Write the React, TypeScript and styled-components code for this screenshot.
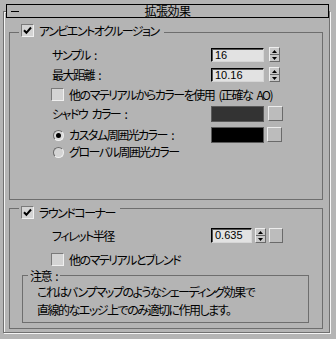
import React from "react";
import styled, { createGlobalStyle } from "styled-components";

const bg = "#b4b4b4";

const GlobalStyle = createGlobalStyle`
  body {
    margin: 0;
    background: ${bg};
  }
`;

const Page = styled.div`
  width: 336px;
  height: 339px;
  overflow: hidden;
  background: ${bg};
  padding-top: 11px;
  box-sizing: border-box;
  font-family: "Noto Sans CJK JP", sans-serif;
  font-size: 12px;
  font-feature-settings: "palt";
  letter-spacing: -1.5px;
  word-spacing: 3px;
  color: #000;
`;

const Rollout = styled.div`
  margin-left: 3px;
  width: 327px;
  height: 322px;
  box-sizing: border-box;
  border: 1px solid #707070;
  box-shadow: 1px 1px 0 #f4f4f4, inset 1px 1px 0 #f4f4f4;
`;

const TitleBar = styled.div`
  display: grid;
  grid-template-columns: 1fr auto 1fr;
  align-items: center;
  margin: -8px 0 0 2px;
  height: 14px;
  box-sizing: border-box;
  border: 1px solid #000;
  background: ${bg};
  line-height: 12px;
  letter-spacing: -0.5px;
`;

const Minus = styled.span`
  display: block;
  width: 8px;
  height: 1px;
  margin-left: 4px;
  background: #000;
`;

const Group = styled.div<{ $mt: number; $h: number }>`
  margin: ${(p) => p.$mt}px 0 0 5px;
  width: 314px;
  height: ${(p) => p.$h}px;
  box-sizing: border-box;
  border: 1px solid #6e6e6e;
`;

const Legend = styled.div<{ $mt: number }>`
  display: flex;
  align-items: center;
  gap: 5px;
  width: fit-content;
  height: 13px;
  margin: ${(p) => p.$mt}px 0 0 9px;
  padding: 0 5px 0 2px;
  background: ${bg};
  white-space: nowrap;
  line-height: 13px;
`;

const Row = styled.div<{ $mt: number; $h: number }>`
  display: grid;
  grid-template-columns: 201px auto;
  align-items: center;
  margin-top: ${(p) => p.$mt}px;
  height: ${(p) => p.$h}px;
`;

const Label = styled.span<{ $indent?: number }>`
  display: flex;
  align-items: center;
  gap: 5px;
  padding-left: ${(p) => p.$indent ?? 42}px;
  white-space: nowrap;
  line-height: 14px;
`;

const CheckRow = styled.div<{ $mt: number }>`
  display: flex;
  align-items: center;
  gap: 5px;
  height: 13px;
  margin-top: ${(p) => p.$mt}px;
  padding-left: 41px;
  white-space: nowrap;
  line-height: 13px;
`;

const Controls = styled.div<{ $gap: number }>`
  display: flex;
  align-items: center;
  gap: ${(p) => p.$gap}px;
`;

const NumField = styled.div<{ $w: number; $h: number }>`
  width: ${(p) => p.$w}px;
  height: ${(p) => p.$h}px;
  box-sizing: border-box;
  padding-left: 3px;
  border-style: solid;
  border-width: 1px;
  border-color: #000 #d6d6d6 #d6d6d6 #000;
  box-shadow: inset 1px 1px 0 #555;
  background: #e2e2e2;
  font-family: "Liberation Sans", Arial, sans-serif;
  font-size: 11px;
  letter-spacing: 0;
  line-height: ${(p) => p.$h - 2}px;
`;

const SpinBox = styled.div<{ $h: number }>`
  display: flex;
  flex-direction: column;
  width: 11px;
  height: ${(p) => p.$h}px;
  box-sizing: border-box;
  border-style: solid;
  border-width: 1px;
  border-color: #eeeeee #6a6a6a #6a6a6a #eeeeee;
  background: #c8c8c8;
`;

const SpinHalf = styled.div<{ $down?: boolean }>`
  flex: 1;
  display: flex;
  align-items: center;
  justify-content: center;
  border-top: ${(p) => (p.$down ? "1px solid #6a6a6a" : "none")};
`;

const Swatch = styled.div<{ $color: string; $w: number; $h: number }>`
  width: ${(p) => p.$w}px;
  height: ${(p) => p.$h}px;
  box-sizing: border-box;
  border: 1px solid #5a5a5a;
  background: ${(p) => p.$color};
`;

const MapButton = styled.div<{ $w: number; $h: number; $shift?: number }>`
  width: ${(p) => p.$w}px;
  height: ${(p) => p.$h}px;
  box-sizing: border-box;
  border-style: solid;
  border-width: 1px;
  border-color: #ececec #6a6a6a #6a6a6a #ececec;
  background: #bcbcbc;
  margin-top: ${(p) => p.$shift ?? 0}px;
`;

const CheckBoxBox = styled.span`
  display: inline-flex;
  align-items: center;
  justify-content: center;
  width: 13px;
  height: 13px;
  box-sizing: border-box;
  flex: none;
  border-style: solid;
  border-width: 1px;
  border-color: #7a7a7a #f0f0f0 #f0f0f0 #7a7a7a;
  background: #d4d4d4;
`;

const RadioDot = styled.span<{ $on?: boolean }>`
  display: inline-flex;
  align-items: center;
  justify-content: center;
  width: 11px;
  height: 11px;
  flex: none;
  margin-left: 2px;
  border-radius: 50%;
  box-sizing: border-box;
  border: 1px solid;
  border-color: #6a6a6a #f0f0f0 #f0f0f0 #6a6a6a;
  background: ${(p) => (p.$on ? "#d8d8d8" : "#d4d4d4")};

  &::after {
    content: "";
    display: ${(p) => (p.$on ? "block" : "none")};
    width: 5px;
    height: 5px;
    border-radius: 50%;
    background: #000;
  }
`;

const NoteBox = styled.div`
  margin: 9px 0 0 12px;
  width: 287px;
  height: 48px;
  box-sizing: border-box;
  border: 1px solid #6e6e6e;
`;

const NoteLegend = styled.div`
  width: fit-content;
  height: 14px;
  margin: -7px 0 0 5px;
  padding: 0 3px 0 2px;
  background: ${bg};
  line-height: 14px;
`;

const NoteText = styled.div`
  padding-left: 14px;
  line-height: 18px;
  white-space: nowrap;
`;

const CheckBox = ({ checked }: { checked?: boolean }) => (
  <CheckBoxBox>
    {checked && (
      <svg width="9" height="9" viewBox="0 0 9 9">
        <path d="M1 4.2 L3.4 6.8 L8 1.5" fill="none" stroke="#000" strokeWidth="2" />
      </svg>
    )}
  </CheckBoxBox>
);

const Spinner = ({ h }: { h: number }) => (
  <SpinBox $h={h}>
    <SpinHalf>
      <svg width="5" height="3" viewBox="0 0 5 3">
        <path d="M2.5 0 L5 3 L0 3 Z" fill="#000" />
      </svg>
    </SpinHalf>
    <SpinHalf $down>
      <svg width="5" height="3" viewBox="0 0 5 3">
        <path d="M0 0 L5 0 L2.5 3 Z" fill="#000" />
      </svg>
    </SpinHalf>
  </SpinBox>
);

export default function App() {
  return (
    <Page>
      <GlobalStyle />
      <Rollout>
        <TitleBar>
          <Minus />
          <span>拡張効果</span>
          <span />
        </TitleBar>

        <Group $mt={14} $h={168}>
          <Legend $mt={-9}>
            <CheckBox checked />
            <span>アンビエントオクルージョン</span>
          </Legend>

          <Row $mt={10} $h={14}>
            <Label>サンプル :</Label>
            <Controls $gap={5}>
              <NumField $w={53} $h={14}>16</NumField>
              <Spinner h={15} />
            </Controls>
          </Row>

          <Row $mt={6} $h={14}>
            <Label>最大距離 :</Label>
            <Controls $gap={5}>
              <NumField $w={53} $h={14}>10.16</NumField>
              <Spinner h={15} />
            </Controls>
          </Row>

          <CheckRow $mt={7}>
            <CheckBox />
            <span>他のマテリアルからカラーを使用 (正確な AO)</span>
          </CheckRow>

          <Row $mt={4} $h={17}>
            <Label>シャドウ カラー :</Label>
            <Controls $gap={4}>
              <Swatch $color="#333333" $w={53} $h={16} />
              <MapButton $w={15} $h={15} $shift={-1} />
            </Controls>
          </Row>

          <Row $mt={4} $h={18}>
            <Label $indent={41}>
              <RadioDot $on />
              <span>カスタム周囲光カラー :</span>
            </Label>
            <Controls $gap={3}>
              <Swatch $color="#000000" $w={53} $h={16} />
              <MapButton $w={15} $h={15} $shift={-2} />
            </Controls>
          </Row>

          <Row $mt={1} $h={13}>
            <Label $indent={41}>
              <RadioDot />
              <span>グローバル周囲光カラー</span>
            </Label>
          </Row>
        </Group>

        <Group $mt={8} $h={121}>
          <Legend $mt={-3}>
            <CheckBox checked />
            <span>ラウンドコーナー</span>
          </Legend>

          <Row $mt={9} $h={15}>
            <Label>フィレット半径</Label>
            <Controls $gap={3}>
              <NumField $w={41} $h={15}>0.635</NumField>
              <Spinner h={15} />
              <MapButton $w={14} $h={15} />
            </Controls>
          </Row>

          <CheckRow $mt={10}>
            <CheckBox />
            <span>他のマテリアルとブレンド</span>
          </CheckRow>

          <NoteBox>
            <NoteLegend>注意 :</NoteLegend>
            <NoteText>
              これはバンプマップのようなシェーディング効果で
              <br />
              直線的なエッジ上でのみ適切に作用します。
            </NoteText>
          </NoteBox>
        </Group>
      </Rollout>
    </Page>
  );
}
